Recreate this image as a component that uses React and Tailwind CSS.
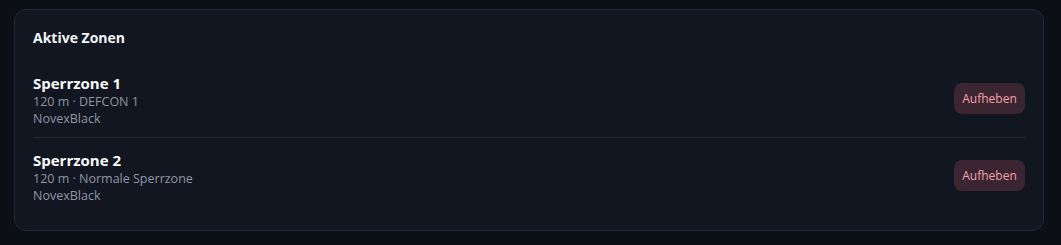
const zones = [
  { name: 'Sperrzone 1', detail: '120 m · DEFCON 1', owner: 'NovexBlack' },
  { name: 'Sperrzone 2', detail: '120 m · Normale Sperrzone', owner: 'NovexBlack' },
]

export default function App() {
  return (
    <div
      className="min-h-[245px] bg-[#0c0f15] pl-[14px] pr-[17px] pt-[9px] pb-[13px]"
      style={{ fontFamily: "'Open Sans', 'Noto Sans', sans-serif" }}
    >
      <div className="rounded-[12px] border border-[#242a35] bg-[#111620] px-[18px] pt-[18px] pb-[16px]">
        <h2 className="text-[14px] font-bold leading-[20px] text-[#f3f4f6]">Aktive Zonen</h2>
        <div className="mt-[13px] flex flex-col divide-y divide-[#232936]">
          {zones.map((zone) => (
            <div key={zone.name} className="flex items-start justify-between pt-[12px] pb-[10px]">
              <div className="flex flex-col">
                <span className="text-[15px] font-bold leading-[20px] text-[#f9fafb]">{zone.name}</span>
                <span className="text-[12.5px] leading-[17px] text-[#8f96a3]">{zone.detail}</span>
                <span className="text-[12.5px] leading-[17px] text-[#8f96a3]">{zone.owner}</span>
              </div>
              <button
                type="button"
                className="mt-[10px] h-[31px] w-[71px] rounded-[8px] bg-[#3a2530] text-[12px] text-[#f4a0ae]"
              >
                Aufheben
              </button>
            </div>
          ))}
        </div>
      </div>
    </div>
  )
}
